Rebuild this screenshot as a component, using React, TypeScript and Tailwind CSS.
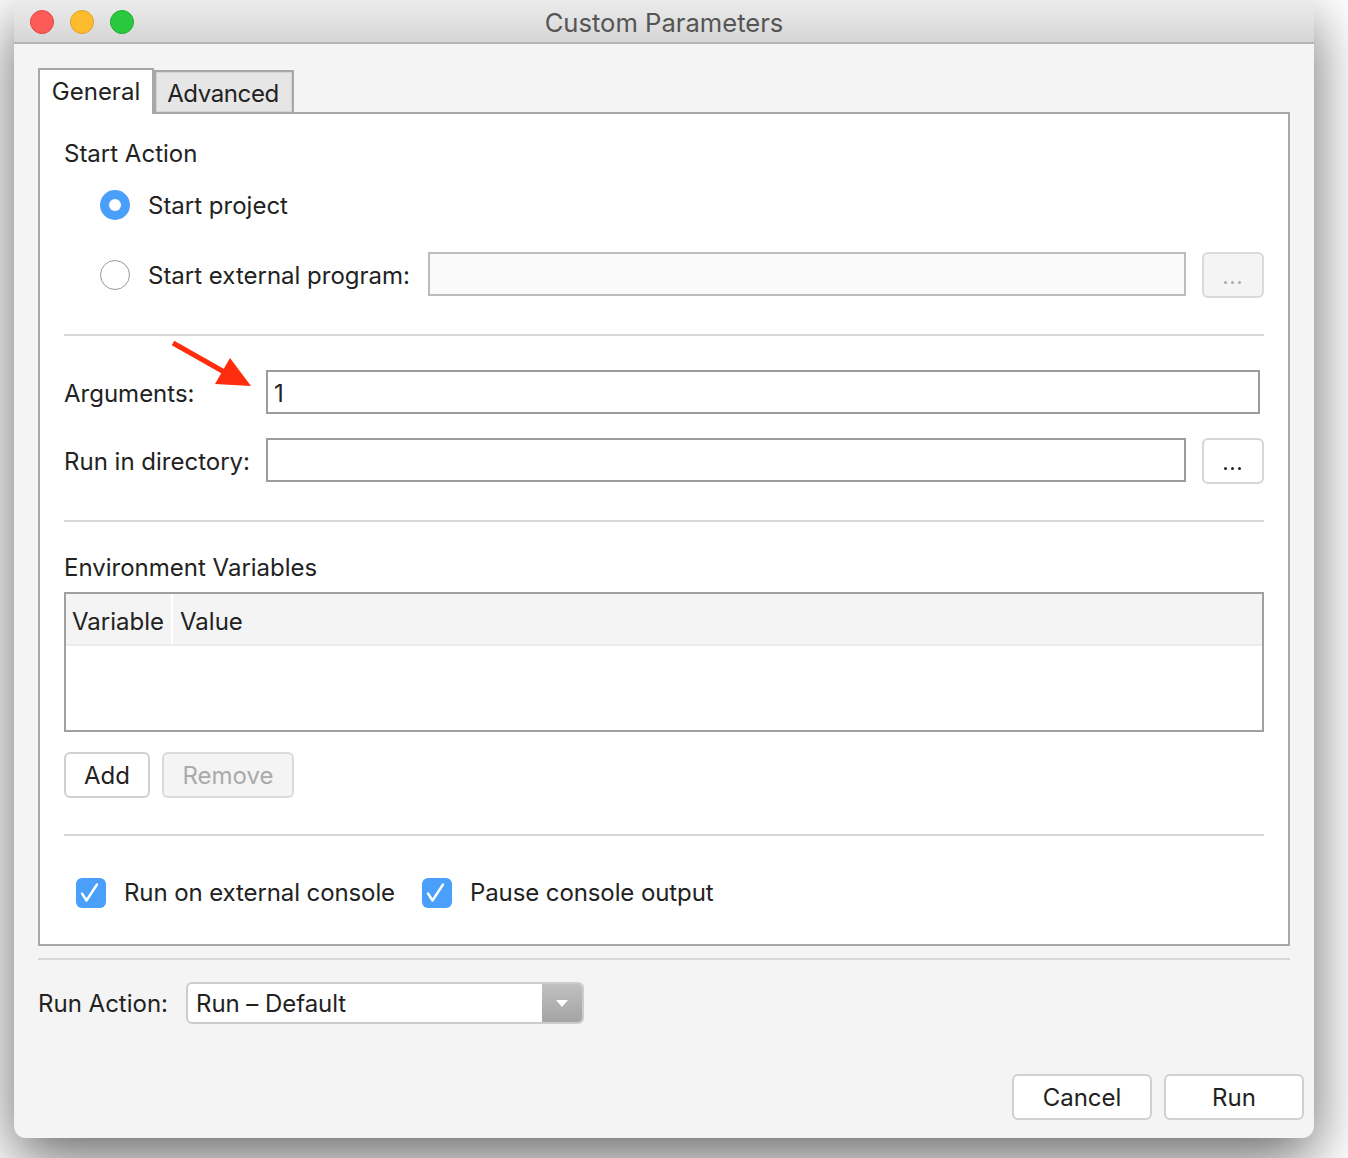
const Divider = ({ className = "" }: { className?: string }) => (
  <div className={`h-[2px] bg-[#d8d8d8] ${className}`} />
);

const Btn = ({ label, disabled = false, className = "" }: { label: string; disabled?: boolean; className?: string }) => (
  <button
    className={`h-[46px] rounded-[6px] border-2 border-[#d0d0d0] flex items-center justify-center pt-[2px] text-[24px] ${
      disabled ? "bg-[#f4f4f4] text-[#aaaaaa] border-[#dadada]" : "bg-white text-[#222222]"
    } ${className}`}
  >
    {label}
  </button>
);

const Dots = ({ disabled = false }: { disabled?: boolean }) => (
  <div
    className={`w-[62px] h-[46px] rounded-[6px] border-2 flex items-end justify-center pb-[12px] pr-[1px] gap-[4px] ${
      disabled ? "bg-[#f4f4f4] border-[#dadada]" : "bg-white border-[#d6d6d6]"
    }`}
  >
    {[0, 1, 2].map((i) => (
      <span key={i} className={`w-[3px] h-[3px] rounded-full ${disabled ? "bg-[#aaaaaa]" : "bg-[#222222]"}`} />
    ))}
  </div>
);

const Check = ({ label }: { label: string }) => (
  <div className="flex items-center gap-[18px]">
    <div className="w-[30px] h-[30px] rounded-[6px] bg-[#4a9ffb] flex items-center justify-center">
      <svg width="30" height="30" viewBox="0 0 30 30" fill="none">
        <path d="M6 15.5 L10.5 22.5 L21 6.5" stroke="white" strokeWidth="2.4" strokeLinecap="round" strokeLinejoin="round" />
      </svg>
    </div>
    <span className="tracking-[-0.1px]">{label}</span>
  </div>
);

export default function App() {
  return (
    <div className="h-[1158px] w-[1348px] overflow-hidden bg-white pl-[14px] font-['Inter','Noto_Sans',sans-serif] text-[24px] leading-[30px] text-[#222222]">
      <div className="relative w-[1300px] h-[1138px] rounded-[12px] bg-[#f4f4f4] shadow-[0_20px_60px_rgba(0,0,0,0.6)]">
        {/* title bar */}
        <div className="relative h-[44px] rounded-t-[12px] border-b-2 border-[#b4b4b4] bg-gradient-to-b from-[#ececec] to-[#d6d6d6] flex items-center justify-center">
          <div className="absolute left-[16px] top-[10px] flex gap-[16px]">
            <span className="w-[24px] h-[24px] rounded-full bg-[#fc5b57] border border-[#e2463f]" />
            <span className="w-[24px] h-[24px] rounded-full bg-[#fdbc2e] border border-[#e0a028]" />
            <span className="w-[24px] h-[24px] rounded-full bg-[#29c83f] border border-[#1eab2c]" />
          </div>
          <span className="text-[25.6px] text-[#555555] pt-[3px]">Custom Parameters</span>
        </div>

        <div className="pl-[24px] pr-[24px] pt-[24px]">
          {/* tabs */}
          <div className="flex items-end relative z-10 -mb-[2px] h-[46px]">
            <div className="w-[116px] h-[46px] bg-white border-2 border-b-0 border-[#a8a8a8] flex items-center justify-center pb-[1px]">
              General
            </div>
            <div className="w-[140px] h-[42px] mb-[2px] bg-[#e6e6e6] border-2 border-b-0 border-[#a8a8a8] shadow-[inset_0_0_0_1px_#d4d4d4] flex items-center justify-center pt-[3px] pr-[2px] tracking-[-0.4px]">
              Advanced
            </div>
          </div>

          {/* panel */}
          <div className="relative w-[1252px] h-[834px] border-2 border-[#a8a8a8] bg-white pl-[24px] pr-[24px] pt-[25px]">
            <div className="h-[30px] flex items-center">Start Action</div>

            <div className="flex items-center h-[30px] mt-[21px] pl-[36px]">
              <div className="w-[30px] h-[30px] rounded-full bg-[#4a9ffb] flex items-center justify-center">
                <span className="w-[12px] h-[12px] rounded-full bg-white" />
              </div>
              <span className="ml-[18px] mt-[2px]">Start project</span>
            </div>

            <div className="flex items-start mt-[32px] pl-[36px] h-[46px]">
              <div className="mt-[8px] w-[30px] h-[30px] rounded-full bg-white border border-[#9a9a9a]" />
              <span className="ml-[18px] w-[280px] mt-[9px]">Start external program:</span>
              <div className="w-[758px] h-[44px] border-2 border-[#bcbcbc] bg-[#fafafa]" />
              <div className="ml-[16px]">
                <Dots disabled />
              </div>
            </div>

            <Divider className="mt-[36px]" />

            <div className="flex items-center mt-[34px] h-[44px]">
              <span className="w-[202px] pt-[4px]">Arguments:</span>
              <div className="w-[994px] h-[44px] border-2 border-[#9c9c9c] bg-white flex items-center pl-[6px] pt-[4px]">1</div>
            </div>

            <div className="flex items-start mt-[24px] h-[46px]">
              <span className="w-[202px] mt-[9px]">Run in directory:</span>
              <div className="w-[920px] h-[44px] border-2 border-[#9c9c9c] bg-white" />
              <div className="ml-[16px]">
                <Dots />
              </div>
            </div>

            <Divider className="mt-[36px]" />

            <div className="h-[30px] flex items-center mt-[30px] pt-[2px]">Environment Variables</div>

            <div className="mt-[10px] h-[140px] border-2 border-[#a0a0a0] bg-white">
              <div className="h-[52px] bg-[#f4f4f4] border-b-2 border-[#ebebeb] flex">
                <div className="w-[107px] pl-[6px] pt-[5px] flex items-center border-r-2 border-white">Variable</div>
                <div className="pl-[7px] pt-[5px] flex items-center">Value</div>
              </div>
            </div>

            <div className="flex gap-[12px] mt-[20px]">
              <Btn label="Add" className="w-[86px]" />
              <Btn label="Remove" disabled className="w-[132px]" />
            </div>

            <Divider className="mt-[36px]" />

            <div className="flex items-center gap-[27px] mt-[42px] pl-[12px]">
              <Check label="Run on external console" />
              <Check label="Pause console output" />
            </div>

            {/* annotation arrow */}
            <svg className="absolute left-[130px] top-[226px]" width="84" height="50" viewBox="0 0 84 50">
              <path d="M3 3 L56 33" stroke="#ff2d0d" strokeWidth="5" />
              <path d="M81 46 L45 44 L60 18 Z" fill="#ff2d0d" />
            </svg>
          </div>

          <Divider className="mt-[12px] w-[1252px]" />

          <div className="flex items-center mt-[22px] h-[42px]">
            <span className="w-[148px] pt-[2px]">Run Action:</span>
            <div className="w-[398px] h-[42px] flex rounded-[6px] border-2 border-[#cccccc] bg-white overflow-hidden">
              <span className="flex-1 pl-[8px] pt-[2px] flex items-center tracking-[-0.05px]">Run – Default</span>
              <div className="w-[40px] -my-[2px] bg-gradient-to-b from-[#c2c2c2] to-[#a2a2a2] flex items-center justify-center">
                <svg width="14" height="9" viewBox="0 0 14 9">
                  <path d="M1 1 H13 L7 8 Z" fill="white" />
                </svg>
              </div>
            </div>
          </div>

          <div className="flex justify-end gap-[12px] mt-[50px] -mr-[14px]">
            <Btn label="Cancel" className="w-[140px]" />
            <Btn label="Run" className="w-[140px]" />
          </div>
        </div>
      </div>
    </div>
  );
}
